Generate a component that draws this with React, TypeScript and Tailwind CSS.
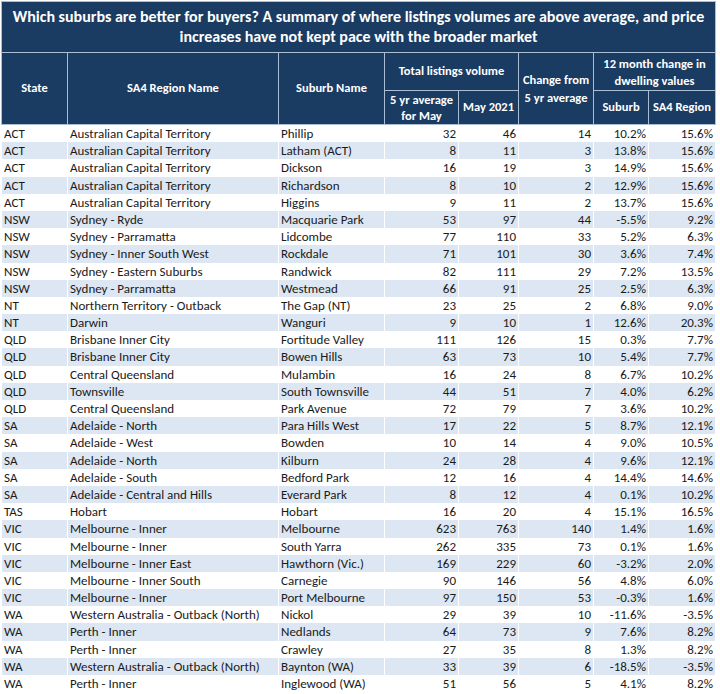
import React from "react";

type Row = [string, string, string, string, string, string, string, string];

const rows: Row[] = [
  ["ACT", "Australian Capital Territory", "Phillip", "32", "46", "14", "10.2%", "15.6%"],
  ["ACT", "Australian Capital Territory", "Latham (ACT)", "8", "11", "3", "13.8%", "15.6%"],
  ["ACT", "Australian Capital Territory", "Dickson", "16", "19", "3", "14.9%", "15.6%"],
  ["ACT", "Australian Capital Territory", "Richardson", "8", "10", "2", "12.9%", "15.6%"],
  ["ACT", "Australian Capital Territory", "Higgins", "9", "11", "2", "13.7%", "15.6%"],
  ["NSW", "Sydney - Ryde", "Macquarie Park", "53", "97", "44", "-5.5%", "9.2%"],
  ["NSW", "Sydney - Parramatta", "Lidcombe", "77", "110", "33", "5.2%", "6.3%"],
  ["NSW", "Sydney - Inner South West", "Rockdale", "71", "101", "30", "3.6%", "7.4%"],
  ["NSW", "Sydney - Eastern Suburbs", "Randwick", "82", "111", "29", "7.2%", "13.5%"],
  ["NSW", "Sydney - Parramatta", "Westmead", "66", "91", "25", "2.5%", "6.3%"],
  ["NT", "Northern Territory - Outback", "The Gap (NT)", "23", "25", "2", "6.8%", "9.0%"],
  ["NT", "Darwin", "Wanguri", "9", "10", "1", "12.6%", "20.3%"],
  ["QLD", "Brisbane Inner City", "Fortitude Valley", "111", "126", "15", "0.3%", "7.7%"],
  ["QLD", "Brisbane Inner City", "Bowen Hills", "63", "73", "10", "5.4%", "7.7%"],
  ["QLD", "Central Queensland", "Mulambin", "16", "24", "8", "6.7%", "10.2%"],
  ["QLD", "Townsville", "South Townsville", "44", "51", "7", "4.0%", "6.2%"],
  ["QLD", "Central Queensland", "Park Avenue", "72", "79", "7", "3.6%", "10.2%"],
  ["SA", "Adelaide - North", "Para Hills West", "17", "22", "5", "8.7%", "12.1%"],
  ["SA", "Adelaide - West", "Bowden", "10", "14", "4", "9.0%", "10.5%"],
  ["SA", "Adelaide - North", "Kilburn", "24", "28", "4", "9.6%", "12.1%"],
  ["SA", "Adelaide - South", "Bedford Park", "12", "16", "4", "14.4%", "14.6%"],
  ["SA", "Adelaide - Central and Hills", "Everard Park", "8", "12", "4", "0.1%", "10.2%"],
  ["TAS", "Hobart", "Hobart", "16", "20", "4", "15.1%", "16.5%"],
  ["VIC", "Melbourne - Inner", "Melbourne", "623", "763", "140", "1.4%", "1.6%"],
  ["VIC", "Melbourne - Inner", "South Yarra", "262", "335", "73", "0.1%", "1.6%"],
  ["VIC", "Melbourne - Inner East", "Hawthorn (Vic.)", "169", "229", "60", "-3.2%", "2.0%"],
  ["VIC", "Melbourne - Inner South", "Carnegie", "90", "146", "56", "4.8%", "6.0%"],
  ["VIC", "Melbourne - Inner", "Port Melbourne", "97", "150", "53", "-0.3%", "1.6%"],
  ["WA", "Western Australia - Outback (North)", "Nickol", "29", "39", "10", "-11.6%", "-3.5%"],
  ["WA", "Perth - Inner", "Nedlands", "64", "73", "9", "7.6%", "8.2%"],
  ["WA", "Perth - Inner", "Crawley", "27", "35", "8", "1.3%", "8.2%"],
  ["WA", "Western Australia - Outback (North)", "Baynton (WA)", "33", "39", "6", "-18.5%", "-3.5%"],
  ["WA", "Perth - Inner", "Inglewood (WA)", "51", "56", "5", "4.1%", "8.2%"],
];

const cols = "grid-cols-[65px_210px_105px_73px_59px_74px_54px_66px]";

export default function App() {
  return (
    <div className="w-[720px] h-[694px] overflow-hidden bg-white font-['Carlito','Lato',sans-serif] text-[#1a1a1a]">
      <div className="pl-px pt-px">
        {/* Header */}
        <div
          className={`grid ${cols} grid-rows-[50px_37px_33px] gap-px bg-[#a9bdd5] p-px w-[715px] text-white`}
        >
          <div className="col-span-8 bg-[#1a3c62] flex flex-col items-center justify-center font-bold text-[16px] leading-[20px]">
            <div className="whitespace-nowrap">Which suburbs are better for buyers? A summary of where listings volumes are above average, and price</div>
            <div className="whitespace-nowrap">increases have not kept pace with the broader market</div>
          </div>
          <div className="row-span-2 bg-[#1a3c62] flex items-center justify-center text-[12.5px] font-semibold">
            State
          </div>
          <div className="row-span-2 bg-[#1a3c62] flex items-center justify-center text-[12.5px] font-semibold">
            SA4 Region Name
          </div>
          <div className="row-span-2 bg-[#1a3c62] flex items-center justify-center text-[12.5px] font-semibold">
            Suburb Name
          </div>
          <div className="col-span-2 bg-[#1a3c62] flex items-center justify-center text-[12.5px] font-semibold">
            Total listings volume
          </div>
          <div className="row-span-2 bg-[#1a3c62] flex flex-col items-center justify-center text-[12.5px] font-semibold leading-[18px]">
            <div>Change from</div>
            <div>5 yr average</div>
          </div>
          <div className="col-span-2 bg-[#1a3c62] flex flex-col items-center justify-center text-[12.5px] font-semibold leading-[17px]">
            <div>12 month change in</div>
            <div>dwelling values</div>
          </div>
          <div className="bg-[#1a3c62] flex flex-col items-center justify-center text-[12.5px] font-semibold leading-[16px]">
            <div>5 yr average</div>
            <div>for May</div>
          </div>
          <div className="bg-[#1a3c62] flex items-center justify-center text-[12.5px] font-semibold">
            May 2021
          </div>
          <div className="bg-[#1a3c62] flex items-center justify-center text-[12.5px] font-semibold">
            Suburb
          </div>
          <div className="bg-[#1a3c62] flex items-center justify-center text-[12.5px] font-semibold">
            SA4 Region
          </div>
        </div>
        {/* Body */}
        <div className={`grid ${cols} auto-rows-[17.2px] gap-x-px px-px w-[715px] text-[13px] leading-[17px]`}>
          {rows.map((r, i) => {
            const bg = i % 2 === 1 ? "bg-[#dce7f3]" : "bg-white";
            return (
              <React.Fragment key={i}>
                <div className={`${bg} px-[2px] whitespace-nowrap`}>{r[0]}</div>
                <div className={`${bg} px-[2px] whitespace-nowrap`}>{r[1]}</div>
                <div className={`${bg} px-[2px] whitespace-nowrap`}>{r[2]}</div>
                <div className={`${bg} px-[2px] text-right`}>{r[3]}</div>
                <div className={`${bg} px-[2px] text-right`}>{r[4]}</div>
                <div className={`${bg} px-[2px] text-right`}>{r[5]}</div>
                <div className={`${bg} px-[2px] text-right`}>{r[6]}</div>
                <div className={`${bg} px-[2px] text-right`}>{r[7]}</div>
              </React.Fragment>
            );
          })}
        </div>
      </div>
    </div>
  );
}
